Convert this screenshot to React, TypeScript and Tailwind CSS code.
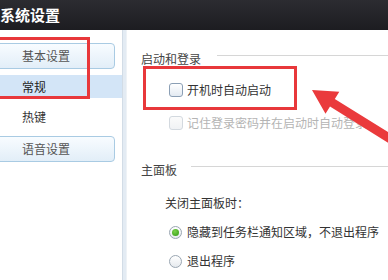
const font = { fontFamily: '"Microsoft YaHei", "Noto Sans CJK SC", sans-serif' };

function Checkbox({ disabled }: { disabled?: boolean }) {
  return (
    <span
      className={
        "w-[14px] h-[14px] rounded-[3px] border shrink-0 " +
        (disabled
          ? "border-[#d3d9df] bg-gradient-to-b from-[#fbfbfb] to-[#f0f2f4]"
          : "border-[#8b9fb5] bg-gradient-to-b from-[#ffffff] to-[#e3eaf2]")
      }
    />
  );
}

function Radio({ checked }: { checked?: boolean }) {
  return (
    <span className="w-[13px] h-[13px] rounded-full border border-[#9aa6b2] bg-gradient-to-b from-[#ffffff] to-[#e6eaee] shrink-0 flex items-center justify-center">
      {checked && <span className="w-[7px] h-[7px] rounded-full bg-[radial-gradient(circle_at_40%_35%,#7ad14a,#2f9a12)]" />}
    </span>
  );
}

function SideButton({ label }: { label: string }) {
  return (
    <div className="h-[26px] w-[119px] ml-[-4px] rounded-[4px] border border-[#a9cbe3] bg-gradient-to-b from-[#f8fcff] to-[#e2eef8] flex items-center pl-[25px] text-[12px] text-[#555]">
      {label}
    </div>
  );
}

export default function App() {
  return (
    <div className="relative w-[388px] h-[280px] overflow-hidden bg-white text-[#333]" style={font}>
      <div className="h-[30px] bg-gradient-to-b from-[#2c2c31] to-[#1d1d21] flex items-center">
        <span className="text-white text-[15px] font-bold">系统设置</span>
      </div>

      <div className="flex h-[250px]">
        <div className="w-[122px] pt-[13px] flex flex-col">
          <SideButton label="基本设置" />
          <div className="mt-[6px] h-[23px] bg-[#d3e5f7] flex items-center pl-[22px] text-[12px] text-[#222]">常规</div>
          <div className="h-[32px] pt-[6px] flex items-center pl-[22px] text-[12px] text-[#333]">热键</div>
          <div className="mt-[6px]">
            <SideButton label="语音设置" />
          </div>
        </div>
        <div className="w-[5px] bg-[#e3ebf3] border-l border-[#d2dce6] border-r border-r-[#eef2f6]" />

        <div className="flex-1 pl-[14px] text-[12px]">
          <div className="flex items-center mt-[20px] h-[17px]">
            <span className="text-[#444]">启动和登录</span>
            <span className="flex-1 h-px bg-[#d6d6d6] ml-[16px] mt-[-6px]" />
          </div>
          <div className="flex items-center gap-[4px] ml-[28px] mt-[15px] h-[16px]">
            <Checkbox />
            <span>开机时自动启动</span>
          </div>
          <div className="flex items-center gap-[4px] ml-[28px] mt-[17px] h-[16px]">
            <Checkbox disabled />
            <span className="text-[#b4b4b4]">记住登录密码并在启动时自动登录</span>
          </div>

          <div className="flex items-center mt-[30px] h-[17px]">
            <span className="text-[#444]">主面板</span>
            <span className="flex-1 h-px bg-[#d6d6d6] ml-[14px] mt-[-6px]" />
          </div>
          <div className="ml-[24px] mt-[16px] h-[17px] flex items-center">关闭主面板时：</div>
          <div className="flex items-center gap-[5px] ml-[28px] mt-[13px] h-[16px]">
            <Radio checked />
            <span>隐藏到任务栏通知区域，不退出程序</span>
          </div>
          <div className="flex items-center gap-[5px] ml-[28px] mt-[13px] h-[16px]">
            <Radio />
            <span>退出程序</span>
          </div>
        </div>
      </div>

      {/* annotations */}
      <div className="absolute left-[-3px] top-[37px] w-[93px] h-[62px] border-[3px] border-[#e8383b]" />
      <div className="absolute left-[143px] top-[66px] w-[154px] h-[44px] border-[3px] border-[#e8383b]" />
      <svg className="absolute left-0 top-0" width="388" height="280" viewBox="0 0 388 280">
        <polygon
          fill="#ea3a3c"
          points="312,90 339.3,91.8 334.8,98.9 399.4,139.2 394.6,146.8 330,106.5 325.5,113.8"
        />
      </svg>
    </div>
  );
}
